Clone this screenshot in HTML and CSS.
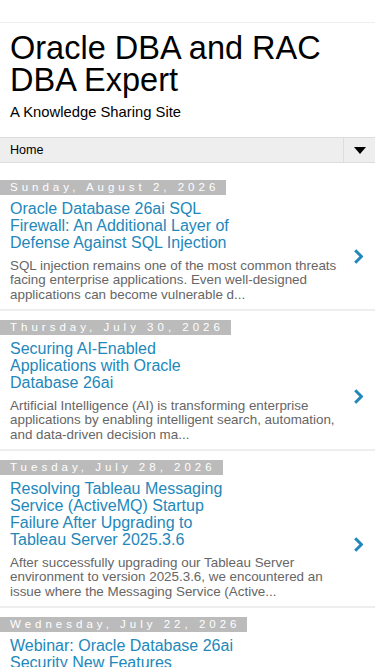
FILE: index.html
```html
<!DOCTYPE html>
<html lang="en">
<head>
    <meta charset="UTF-8">
    <meta name="viewport" content="width=device-width, initial-scale=1.0">
    <title>Oracle DBA and RAC DBA Expert</title>
    <link rel="stylesheet" href="styles.css">
</head>
<body>
    <div class="topbar"></div>

    <header class="header">
        <h1 class="blog-title">Oracle DBA and RAC DBA Expert</h1>
        <p class="description">A Knowledge Sharing Site</p>
    </header>

    <nav class="pages">
        <a href="#" class="pages-home">Home</a>
        <div class="pages-toggle">
            <svg width="12" height="7" viewBox="0 0 12 7"><polygon points="0,0 12,0 6,7" fill="#000"/></svg>
        </div>
    </nav>

    <main class="posts">
        <article class="post">
            <h2 class="date-header"><span>Sunday, August 2, 2026</span></h2>
            <a href="#" class="post-body">
                <div class="post-text">
                    <h3 class="post-title">Oracle Database 26ai SQL Firewall: An Additional Layer of Defense Against SQL Injection</h3>
                    <p class="post-snippet">SQL injection remains one of the most common threats facing enterprise applications. Even well-designed applications can become vulnerable d...</p>
                </div>
                <svg class="chevron" width="9" height="15" viewBox="0 0 9 15"><polyline points="1.2,1.2 7.4,7.5 1.2,13.8" fill="none" stroke="#2288bb" stroke-width="3"/></svg>
            </a>
        </article>

        <article class="post">
            <h2 class="date-header"><span>Thursday, July 30, 2026</span></h2>
            <a href="#" class="post-body">
                <div class="post-text">
                    <h3 class="post-title">Securing AI-Enabled Applications with Oracle Database 26ai</h3>
                    <p class="post-snippet">Artificial Intelligence (AI) is transforming enterprise applications by enabling intelligent search, automation, and data-driven decision ma...</p>
                </div>
                <svg class="chevron" width="9" height="15" viewBox="0 0 9 15"><polyline points="1.2,1.2 7.4,7.5 1.2,13.8" fill="none" stroke="#2288bb" stroke-width="3"/></svg>
            </a>
        </article>

        <article class="post">
            <h2 class="date-header"><span>Tuesday, July 28, 2026</span></h2>
            <a href="#" class="post-body">
                <div class="post-text">
                    <h3 class="post-title">Resolving Tableau Messaging Service (ActiveMQ) Startup Failure After Upgrading to Tableau Server 2025.3.6</h3>
                    <p class="post-snippet">After successfully upgrading our Tableau Server environment to version 2025.3.6, we encountered an issue where the Messaging Service (Active...</p>
                </div>
                <svg class="chevron" width="9" height="15" viewBox="0 0 9 15"><polyline points="1.2,1.2 7.4,7.5 1.2,13.8" fill="none" stroke="#2288bb" stroke-width="3"/></svg>
            </a>
        </article>

        <article class="post">
            <h2 class="date-header"><span>Wednesday, July 22, 2026</span></h2>
            <a href="#" class="post-body">
                <div class="post-text">
                    <h3 class="post-title">Webinar: Oracle Database 26ai Security New Features</h3>
                    <p class="post-snippet">Join this session to explore the new security features introduced in Oracle Database 26ai and how they help protect...</p>
                </div>
                <svg class="chevron" width="9" height="15" viewBox="0 0 9 15"><polyline points="1.2,1.2 7.4,7.5 1.2,13.8" fill="none" stroke="#2288bb" stroke-width="3"/></svg>
            </a>
        </article>
    </main>
</body>
</html>
```

FILE: styles.css
```css
/* Global */
body {
    font-family: 'Liberation Sans', Arial, sans-serif;
    margin: 0;
    padding: 0;
    background-color: #ffffff;
    color: #000000;
}

a {
    text-decoration: none;
}

/* Top bar */
.topbar {
    height: 22px;
    border-bottom: 1px solid #eeeeee;
}

/* Header */
.header {
    padding: 9px 10px 0;
}

.blog-title {
    margin: 0;
    font-size: 32.5px;
    line-height: 32px;
    font-weight: 400;
    color: #000000;
}

.description {
    margin: 8px 0 0;
    font-size: 14.8px;
    line-height: 17px;
    color: #000000;
}

/* Pages nav */
.pages {
    display: flex;
    margin-top: 16px;
    height: 24px;
    background-color: #eeeeee;
    border-top: 1px solid #dddddd;
    border-bottom: 1px solid #dddddd;
}

.pages-home {
    flex: 1;
    padding-left: 10px;
    font-size: 12.6px;
    line-height: 24px;
    color: #000000;
}

.pages-toggle {
    width: 31px;
    border-left: 1px solid #dddddd;
    display: flex;
    align-items: center;
    justify-content: center;
}

/* Posts */
.posts {
    padding-top: 8.3px;
}

.post {
    padding-top: 8.7px;
    border-bottom: 2px solid #eeeeee;
}

.date-header {
    margin: 0;
    font-size: 11.5px;
    line-height: 15px;
    font-weight: 400;
}

.date-header span {
    display: inline-block;
    background-color: #bbbbbb;
    color: #ffffff;
    letter-spacing: 4px;
    padding: 0 7px 0 10px;
}

.post-body {
    display: flex;
    justify-content: space-between;
    align-items: center;
    padding: 6.5px 12px 6.6px 10px;
}

.post-text {
    width: 334px;
}

.post-title {
    margin: 0;
    max-width: 232px;
    font-size: 16px;
    line-height: 16.7px;
    font-weight: 400;
    color: #2288bb;
}

.post-snippet {
    margin: 7.3px 0 0;
    font-size: 13.4px;
    line-height: 14.6px;
    color: #666666;
}

.chevron {
    flex-shrink: 0;
    margin-top: 8px;
}
```
